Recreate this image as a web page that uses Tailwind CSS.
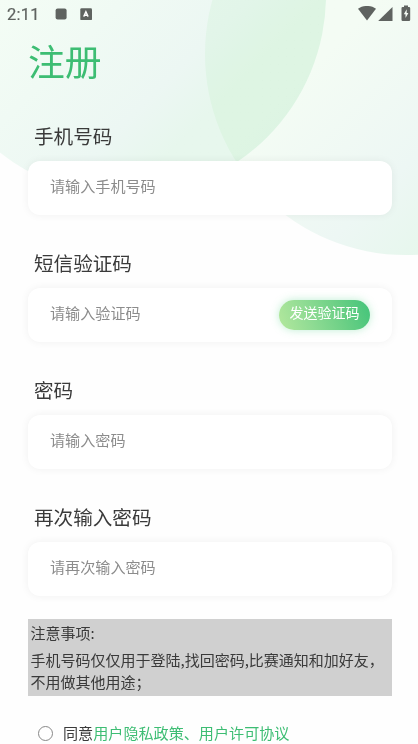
<!DOCTYPE html>
<html lang="zh-CN">
<head>
<meta charset="utf-8">
<meta name="viewport" content="width=device-width, initial-scale=1">
<title>注册</title>
<script src="https://cdn.jsdelivr.net/npm/@tailwindcss/browser@4"></script>
</head>
<body class="bg-white">
<div class="relative isolate h-[744px] w-[418px] overflow-hidden bg-[#fefefe] font-['Noto_Sans_CJK_SC',sans-serif] text-[#3a3a3a]">
  <!-- decorative circles -->
  <div class="absolute -z-10 left-[-76px] top-[-206px] size-[402px] rounded-full bg-linear-135 from-[#f5fef6] from-35% via-[#edf8f4] via-66% to-[#e8f8ee] to-75% mix-blend-multiply"></div>
  <div class="absolute -z-10 left-[205px] top-[-147px] size-[402px] rounded-full bg-linear-135 from-[#f5fdf5] from-40% via-[#eef8f5] via-64% to-[#e7f8ed] to-78% mix-blend-multiply"></div>

  <header class="flex h-7 items-center pl-[7px] pr-[7px] text-[#5f6360]">
    <span class="font-[Roboto,sans-serif] text-[16.500px] leading-7 tracking-[0.2px] pt-px [-webkit-text-stroke:0.2px_#5f6360]">2:11</span>
    <svg class="ml-[15.500px] size-3" viewBox="0 0 12 12"><rect x="0.6" y="0.4" width="11" height="11" rx="2" fill="currentColor"/></svg>
    <svg class="ml-[13px] size-3" viewBox="0 0 12 12"><rect x="0.300" y="0.200" width="11.700" height="12" rx="1.300" fill="currentColor"/><path d="M3.700 8.600 5.900 3.800 8.100 8.600M4.600 7.200h2.600" fill="none" stroke="#fff" stroke-width="1.400"/></svg>
    <div class="ml-auto flex items-center">
      <svg class="h-4 w-[18px]" viewBox="0 0 18 16"><path d="M0 2.800C5-1 13-1 18 2.800L9 14.500Z" fill="currentColor"/></svg>
      <svg class="ml-[2px] h-4 w-[15px]" viewBox="0 0 15 16"><path d="M14.500 1v14H.2Z" fill="currentColor"/></svg>
      <svg class="ml-2 h-4 w-[10px] overflow-visible" viewBox="0 0 10 16"><path d="M3-.6h4v1.500h1q1.200 0 1.200 1.200v11.700q0 1.200-1.200 1.200H1.700Q.5 15 .5 13.800V2.100q0-1.200 1.200-1.200H3Z" fill="currentColor"/><path d="M5.700 3.200 2.800 8.300H4.500v3.700L7.400 6.900H5.700Z" fill="#f5fcf5"/></svg>
    </div>
  </header>

  <main class="pl-7 pr-[26px]">
    <h1 class="h-[82px] pt-[5px] text-[36.800px] font-normal leading-[54px] text-[#3dbd73]">注册</h1>

    <section class="h-[127px]">
      <h2 class="h-[51px] pl-[6px] pt-3 text-[19.600px] leading-7">手机号码</h2>
      <div class="flex h-[54px] items-center rounded-xl bg-white pl-[22px] pb-[5px] text-[15.100px] text-[#8c8c8c] shadow-[0_0_8px_rgba(0,0,0,0.06)]">请输入手机号码</div>
    </section>
    <section class="h-[127px]">
      <h2 class="h-[51px] pl-[6px] pt-3 text-[19.600px] leading-7">短信验证码</h2>
      <div class="flex h-[54px] items-center justify-between rounded-xl bg-white pl-[22px] pr-[22px] text-[15.100px] text-[#8c8c8c] shadow-[0_0_8px_rgba(0,0,0,0.06)]">
        <span class="pb-[5px]">请输入验证码</span>
        <button class="h-[30px] w-[91px] rounded-full bg-linear-[70deg,#b3e89d,#8edb93_35%,#6dd086_65%,#43c47a] pb-[5px] text-[14px] leading-[25px] text-white shadow-[0_0_9px_rgba(70,205,125,0.35)]">发送验证码</button>
      </div>
    </section>
    <section class="h-[127px]">
      <h2 class="h-[51px] pl-[6px] pt-3 text-[19.600px] leading-7">密码</h2>
      <div class="flex h-[54px] items-center rounded-xl bg-white pl-[22px] pb-[5px] text-[15.100px] text-[#8c8c8c] shadow-[0_0_8px_rgba(0,0,0,0.06)]">请输入密码</div>
    </section>
    <section class="h-[128px]">
      <h2 class="h-[51px] pl-[6px] pt-3 text-[19.600px] leading-7">再次输入密码</h2>
      <div class="flex h-[54px] items-center rounded-xl bg-white pl-[22px] pb-[5px] text-[15.100px] text-[#8c8c8c] shadow-[0_0_8px_rgba(0,0,0,0.06)]">请再次输入密码</div>
    </section>

    <div class="h-[77px] w-[364px] bg-[#d0d0d0] pl-[2.500px] pt-[3px] text-[15px] leading-[22.500px]">
      <p class="mb-[4px]">注意事项:</p>
      <p class="whitespace-nowrap">手机号码仅仅用于登陆,找回密码,比赛通知和加好友，<br>不用做其他用途；</p>
    </div>

    <div class="mt-[24px] flex items-center pl-[10px] text-[15.100px] leading-6">
      <span class="mt-[3px] size-[15px] rounded-full border border-[#888] bg-white"></span>
      <p class="ml-[10px]">同意<span class="text-[#3dbd73]">用户隐私政策、用户许可协议</span></p>
    </div>
  </main>
</div>
</body>
</html>
